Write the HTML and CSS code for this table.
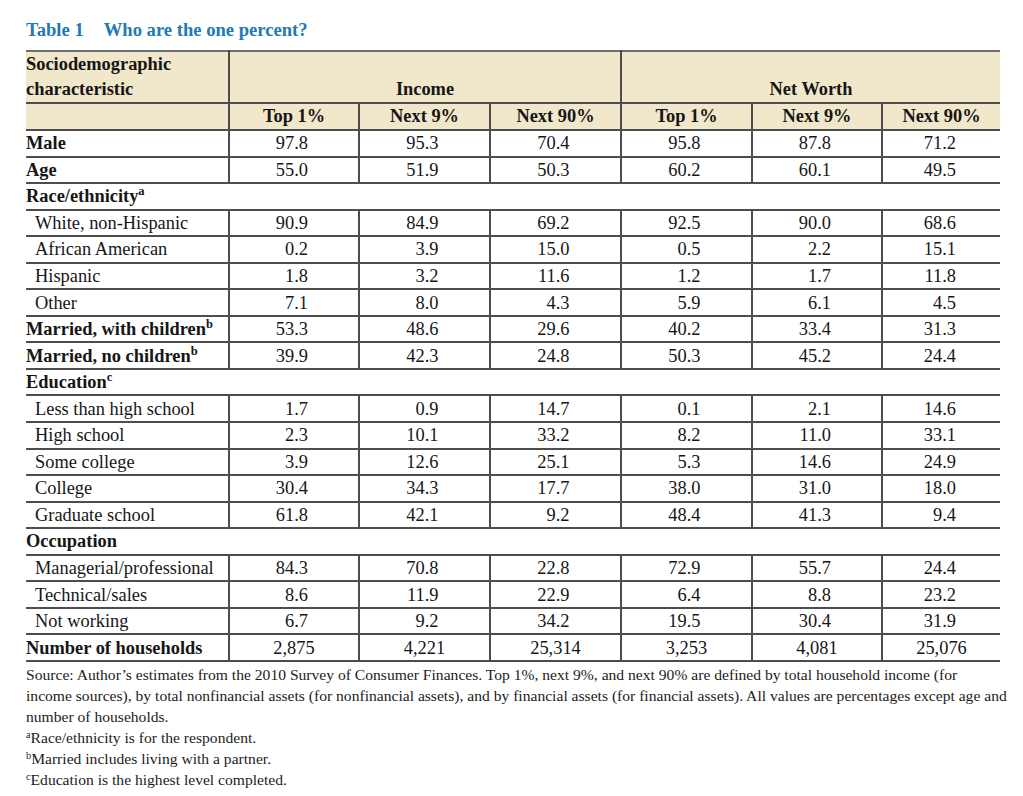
FILE: index.html
```html
<!DOCTYPE html>
<html lang="en">
<head>
<meta charset="utf-8">
<title>Table 1 Who are the one percent?</title>
<link rel="stylesheet" href="styles.css">
</head>
<body>
<div class="page">
  <h1 class="title"><span class="num">Table 1</span><span>Who are the one percent?</span></h1>
  <table class="data">
    <colgroup>
      <col class="c-label"><col class="c-130"><col class="c-131"><col class="c-131"><col class="c-131"><col class="c-130"><col class="c-118">
    </colgroup>
    <thead>
      <tr class="h1">
        <th class="lab">Sociodemographic<br>characteristic</th>
        <th class="grp" colspan="3">Income</th>
        <th class="grp" colspan="3">Net Worth</th>
      </tr>
      <tr class="h2">
        <th class="lab"></th>
        <th>Top 1%</th><th>Next 9%</th><th>Next 90%</th>
        <th>Top 1%</th><th>Next 9%</th><th>Next 90%</th>
      </tr>
    </thead>
    <tbody>
      <tr><td class="lab b">Male</td><td>97.8</td><td>95.3</td><td>70.4</td><td>95.8</td><td>87.8</td><td>71.2</td></tr>
      <tr><td class="lab b">Age</td><td>55.0</td><td>51.9</td><td>50.3</td><td>60.2</td><td>60.1</td><td>49.5</td></tr>
      <tr class="sec"><td colspan="7" class="lab b">Race/ethnicity<sup>a</sup></td></tr>
      <tr><td class="lab ind">White, non-Hispanic</td><td>90.9</td><td>84.9</td><td>69.2</td><td>92.5</td><td>90.0</td><td>68.6</td></tr>
      <tr><td class="lab ind">African American</td><td>0.2</td><td>3.9</td><td>15.0</td><td>0.5</td><td>2.2</td><td>15.1</td></tr>
      <tr><td class="lab ind">Hispanic</td><td>1.8</td><td>3.2</td><td>11.6</td><td>1.2</td><td>1.7</td><td>11.8</td></tr>
      <tr><td class="lab ind">Other</td><td>7.1</td><td>8.0</td><td>4.3</td><td>5.9</td><td>6.1</td><td>4.5</td></tr>
      <tr><td class="lab b">Married, with children<sup>b</sup></td><td>53.3</td><td>48.6</td><td>29.6</td><td>40.2</td><td>33.4</td><td>31.3</td></tr>
      <tr><td class="lab b">Married, no children<sup>b</sup></td><td>39.9</td><td>42.3</td><td>24.8</td><td>50.3</td><td>45.2</td><td>24.4</td></tr>
      <tr class="sec"><td colspan="7" class="lab b">Education<sup>c</sup></td></tr>
      <tr><td class="lab ind">Less than high school</td><td>1.7</td><td>0.9</td><td>14.7</td><td>0.1</td><td>2.1</td><td>14.6</td></tr>
      <tr><td class="lab ind">High school</td><td>2.3</td><td>10.1</td><td>33.2</td><td>8.2</td><td>11.0</td><td>33.1</td></tr>
      <tr><td class="lab ind">Some college</td><td>3.9</td><td>12.6</td><td>25.1</td><td>5.3</td><td>14.6</td><td>24.9</td></tr>
      <tr><td class="lab ind">College</td><td>30.4</td><td>34.3</td><td>17.7</td><td>38.0</td><td>31.0</td><td>18.0</td></tr>
      <tr><td class="lab ind">Graduate school</td><td>61.8</td><td>42.1</td><td>9.2</td><td>48.4</td><td>41.3</td><td>9.4</td></tr>
      <tr class="sec"><td colspan="7" class="lab b">Occupation</td></tr>
      <tr><td class="lab ind">Managerial/professional</td><td>84.3</td><td>70.8</td><td>22.8</td><td>72.9</td><td>55.7</td><td>24.4</td></tr>
      <tr><td class="lab ind">Technical/sales</td><td>8.6</td><td>11.9</td><td>22.9</td><td>6.4</td><td>8.8</td><td>23.2</td></tr>
      <tr><td class="lab ind">Not working</td><td>6.7</td><td>9.2</td><td>34.2</td><td>19.5</td><td>30.4</td><td>31.9</td></tr>
      <tr class="tot"><td class="lab b">Number of households</td><td>2,875</td><td>4,221</td><td>25,314</td><td>3,253</td><td>4,081</td><td>25,076</td></tr>
    </tbody>
  </table>
  <div class="notes">
    <p>Source: Author’s estimates from the 2010 Survey of Consumer Finances. Top 1%, next 9%, and next 90% are defined by total household income (for<br>income sources), by total nonfinancial assets (for nonfinancial assets), and by financial assets (for financial assets). All values are percentages except age and<br>number of households.</p>
    <p><sup>a</sup>Race/ethnicity is for the respondent.</p>
    <p><sup>b</sup>Married includes living with a partner.</p>
    <p><sup>c</sup>Education is the highest level completed.</p>
  </div>
</div>
</body>
</html>
```
FILE: styles.css
```css
html, body {
  margin: 0;
  padding: 0;
  background: #ffffff;
}
body {
  font-family: "Liberation Serif", "Times New Roman", serif;
  color: #161616;
}
.page {
  padding: 19px 0 0 26px;
}
.title {
  margin: 0 0 9px 0;
  font-size: 18.6px;
  line-height: 22px;
  font-weight: bold;
  color: #2279b4;
  display: flex;
  gap: 20px;
}
.data {
  border-collapse: collapse;
  table-layout: fixed;
  width: 974px;
  font-size: 18.4px;
  border-top: 2px solid #6e6e6e;
}
.c-label { width: 203px; }
.c-130 { width: 130px; }
.c-131 { width: 131px; }
.c-118 { width: 118px; }

.data th, .data td {
  padding: 0;
  border: 2px solid #4d4d4d;
  border-top: 0;
}
.data tr > :first-child { border-left: 0; }
.data tr > :last-child { border-right: 0; }

.data thead th {
  background: #f1e8cb;
  font-weight: bold;
  text-align: center;
}
.h1 th {
  height: 50px;
  line-height: 25px;
  vertical-align: bottom;
}
.h1 th.lab {
  vertical-align: top;
  text-align: left;
}
.h2 th {
  height: 25px;
  line-height: 25px;
}
.data tbody td {
  height: 24.55px;
  line-height: 24px;
  text-align: right;
  padding-right: 50px;
}
.data tbody td:nth-child(3),
.data tbody td:nth-child(4),
.data tbody td:nth-child(5) { padding-right: 50.5px; }
.data tbody td:nth-child(7) { padding-right: 44px; }

.data tbody td.lab {
  text-align: left;
  padding-right: 0;
  white-space: nowrap;
}
.b { font-weight: bold; }
.data tbody td.ind { padding-left: 9px; }
.data tr.tot td { text-align: center; padding-right: 0; }
.data tr.tot td.lab { text-align: left; }

.data tr.sec td {
  border-left: 0;
  border-right: 0;
}

sup {
  font-size: 0.68em;
  line-height: 0;
  vertical-align: 0.55em;
}

.notes {
  font-size: 15.6px;
  line-height: 21px;
  white-space: nowrap;
  color: #1c1c1c;
  padding-top: 2px;
}
.notes p { margin: 0; }
.notes sup { font-size: 0.66em; vertical-align: 0.5em; }
```
